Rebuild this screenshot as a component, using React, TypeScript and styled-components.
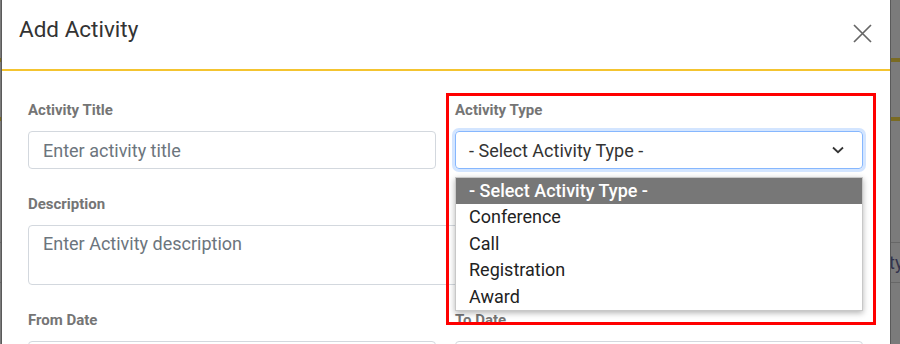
import React from "react";
import styled, { createGlobalStyle } from "styled-components";

const GlobalStyle = createGlobalStyle`
  html, body {
    margin: 0;
    padding: 0;
  }
  body {
    width: 900px;
    height: 344px;
    overflow: hidden;
    font-family: Roboto, "Noto Sans", Arial, sans-serif;
    background:
      linear-gradient(
        to bottom,
        transparent 58px, #7a6b22 58px, #7a6b22 62px, transparent 62px,
        transparent 117px, #7a6b22 117px, #7a6b22 121px, transparent 121px,
        transparent 242px, #676767 242px, #676767 243px, transparent 243px,
        transparent 282px, #676767 282px, #676767 283px, transparent 283px
      ),
      #7b7b7b;
  }
`;

// page content behind the dimmed backdrop, only a sliver shows
const BehindText = styled.span`
  position: absolute;
  left: 889px;
  top: 252px;
  font-size: 18px;
  color: #33334d;
`;

const Modal = styled.div`
  position: relative;
  z-index: 1;
  margin-left: 1px;
  width: 888px;
  height: 344px;
  overflow: hidden;
  background: #fff;
  border-left: 1px solid #5a5a5a;
  border-right: 1px solid #5a5a5a;
`;

const Header = styled.div`
  display: flex;
  justify-content: space-between;
  align-items: flex-start;
  height: 69px;
  padding: 0 18px 0 17px;
  border-bottom: 2px solid #f4c430;
`;

const Title = styled.h5`
  margin: 15px 0 0;
  font-size: 22.5px;
  line-height: 28px;
  font-weight: 400;
  color: #333;
`;

const CloseButton = styled.button`
  margin-top: 24px;
  padding: 0;
  border: 0;
  background: none;
  width: 19px;
  height: 19px;
  display: flex;
  cursor: pointer;
`;

const Body = styled.div`
  display: grid;
  grid-template-columns: 408px 408px;
  column-gap: 19px;
  row-gap: 25px;
  padding: 29px 27px 0 26px;
`;

const FieldGroup = styled.div<{ $wide?: boolean }>`
  position: relative;
  grid-column: ${(p) => (p.$wide ? "1 / -1" : "auto")};
`;

const Label = styled.label`
  display: block;
  font-size: 15px;
  line-height: 20px;
  font-weight: 700;
  color: #757575;
  margin-bottom: 11px;
`;

const Input = styled.input`
  box-sizing: border-box;
  width: 100%;
  height: 38px;
  padding: 0 14px;
  border: 1px solid #d3d8de;
  border-radius: 4px;
  font-family: inherit;
  font-size: 18px;
  color: #333;
  &::placeholder {
    color: #6c757d;
  }
`;

const TextArea = styled.textarea`
  display: block;
  box-sizing: border-box;
  width: 100%;
  height: 60px;
  padding: 7px 14px;
  border: 1px solid #d3d8de;
  border-radius: 4px;
  font-family: inherit;
  font-size: 18px;
  line-height: 21px;
  resize: none;
  &::placeholder {
    color: #6c757d;
  }
`;

const SelectBox = styled.div`
  position: relative;
  box-sizing: border-box;
  height: 38px;
  display: flex;
  align-items: center;
  justify-content: space-between;
  padding: 0 18px 0 13px;
  border: 1px solid #86b7fe;
  border-radius: 4px;
  box-shadow: 0 0 0 3px rgba(13, 110, 253, 0.18);
  font-size: 18px;
  color: #333;
`;

const OptionList = styled.ul`
  position: absolute;
  z-index: 2;
  left: 0;
  right: 0;
  top: 77px;
  margin: 0;
  padding: 0;
  list-style: none;
  background: #fff;
  border: 1px solid #c8c8c8;
  box-shadow: 0 2px 6px rgba(0, 0, 0, 0.3);
`;

const Option = styled.li<{ $active?: boolean }>`
  height: 26.4px;
  line-height: 26.4px;
  padding: 0 13px;
  font-size: 18px;
  font-weight: ${(p) => (p.$active ? 500 : 400)};
  color: ${(p) => (p.$active ? "#fff" : "#222")};
  background: ${(p) => (p.$active ? "#777" : "transparent")};
`;

// red annotation frame drawn over the open select
const Highlight = styled.div`
  position: absolute;
  z-index: 3;
  left: -9px;
  top: -7px;
  width: 430px;
  height: 232px;
  box-sizing: border-box;
  border: 3px solid #ff0000;
  pointer-events: none;
`;

const activityTypes = ["- Select Activity Type -", "Conference", "Call", "Registration", "Award"];

const App = () => {
  return (
    <>
      <GlobalStyle />
      <BehindText>ty</BehindText>
      <Modal>
        <Header>
          <Title>Add Activity</Title>
          <CloseButton aria-label="Close">
            <svg width="19" height="19" viewBox="0 0 19 19">
              <path d="M1 1L18 18M18 1L1 18" stroke="#666" strokeWidth="1.7" fill="none" />
            </svg>
          </CloseButton>
        </Header>
        <Body>
          <FieldGroup>
            <Label>Activity Title</Label>
            <Input placeholder="Enter activity title" />
          </FieldGroup>
          <FieldGroup>
            <Label>Activity Type</Label>
            <SelectBox>
              <span>{activityTypes[0]}</span>
              <svg width="12" height="8" viewBox="0 0 12 8">
                <path d="M1 1.5L6 6.2L11 1.5" stroke="#333" strokeWidth="1.8" fill="none" />
              </svg>
            </SelectBox>
            <OptionList>
              {activityTypes.map((t, i) => (
                <Option key={t} $active={i === 0}>
                  {t}
                </Option>
              ))}
            </OptionList>
            <Highlight />
          </FieldGroup>
          <FieldGroup $wide>
            <Label>Description</Label>
            <TextArea placeholder="Enter Activity description" />
          </FieldGroup>
          <FieldGroup>
            <Label>From Date</Label>
            <Input />
          </FieldGroup>
          <FieldGroup>
            <Label>To Date</Label>
            <Input />
          </FieldGroup>
        </Body>
      </Modal>
    </>
  );
};

export default App;
